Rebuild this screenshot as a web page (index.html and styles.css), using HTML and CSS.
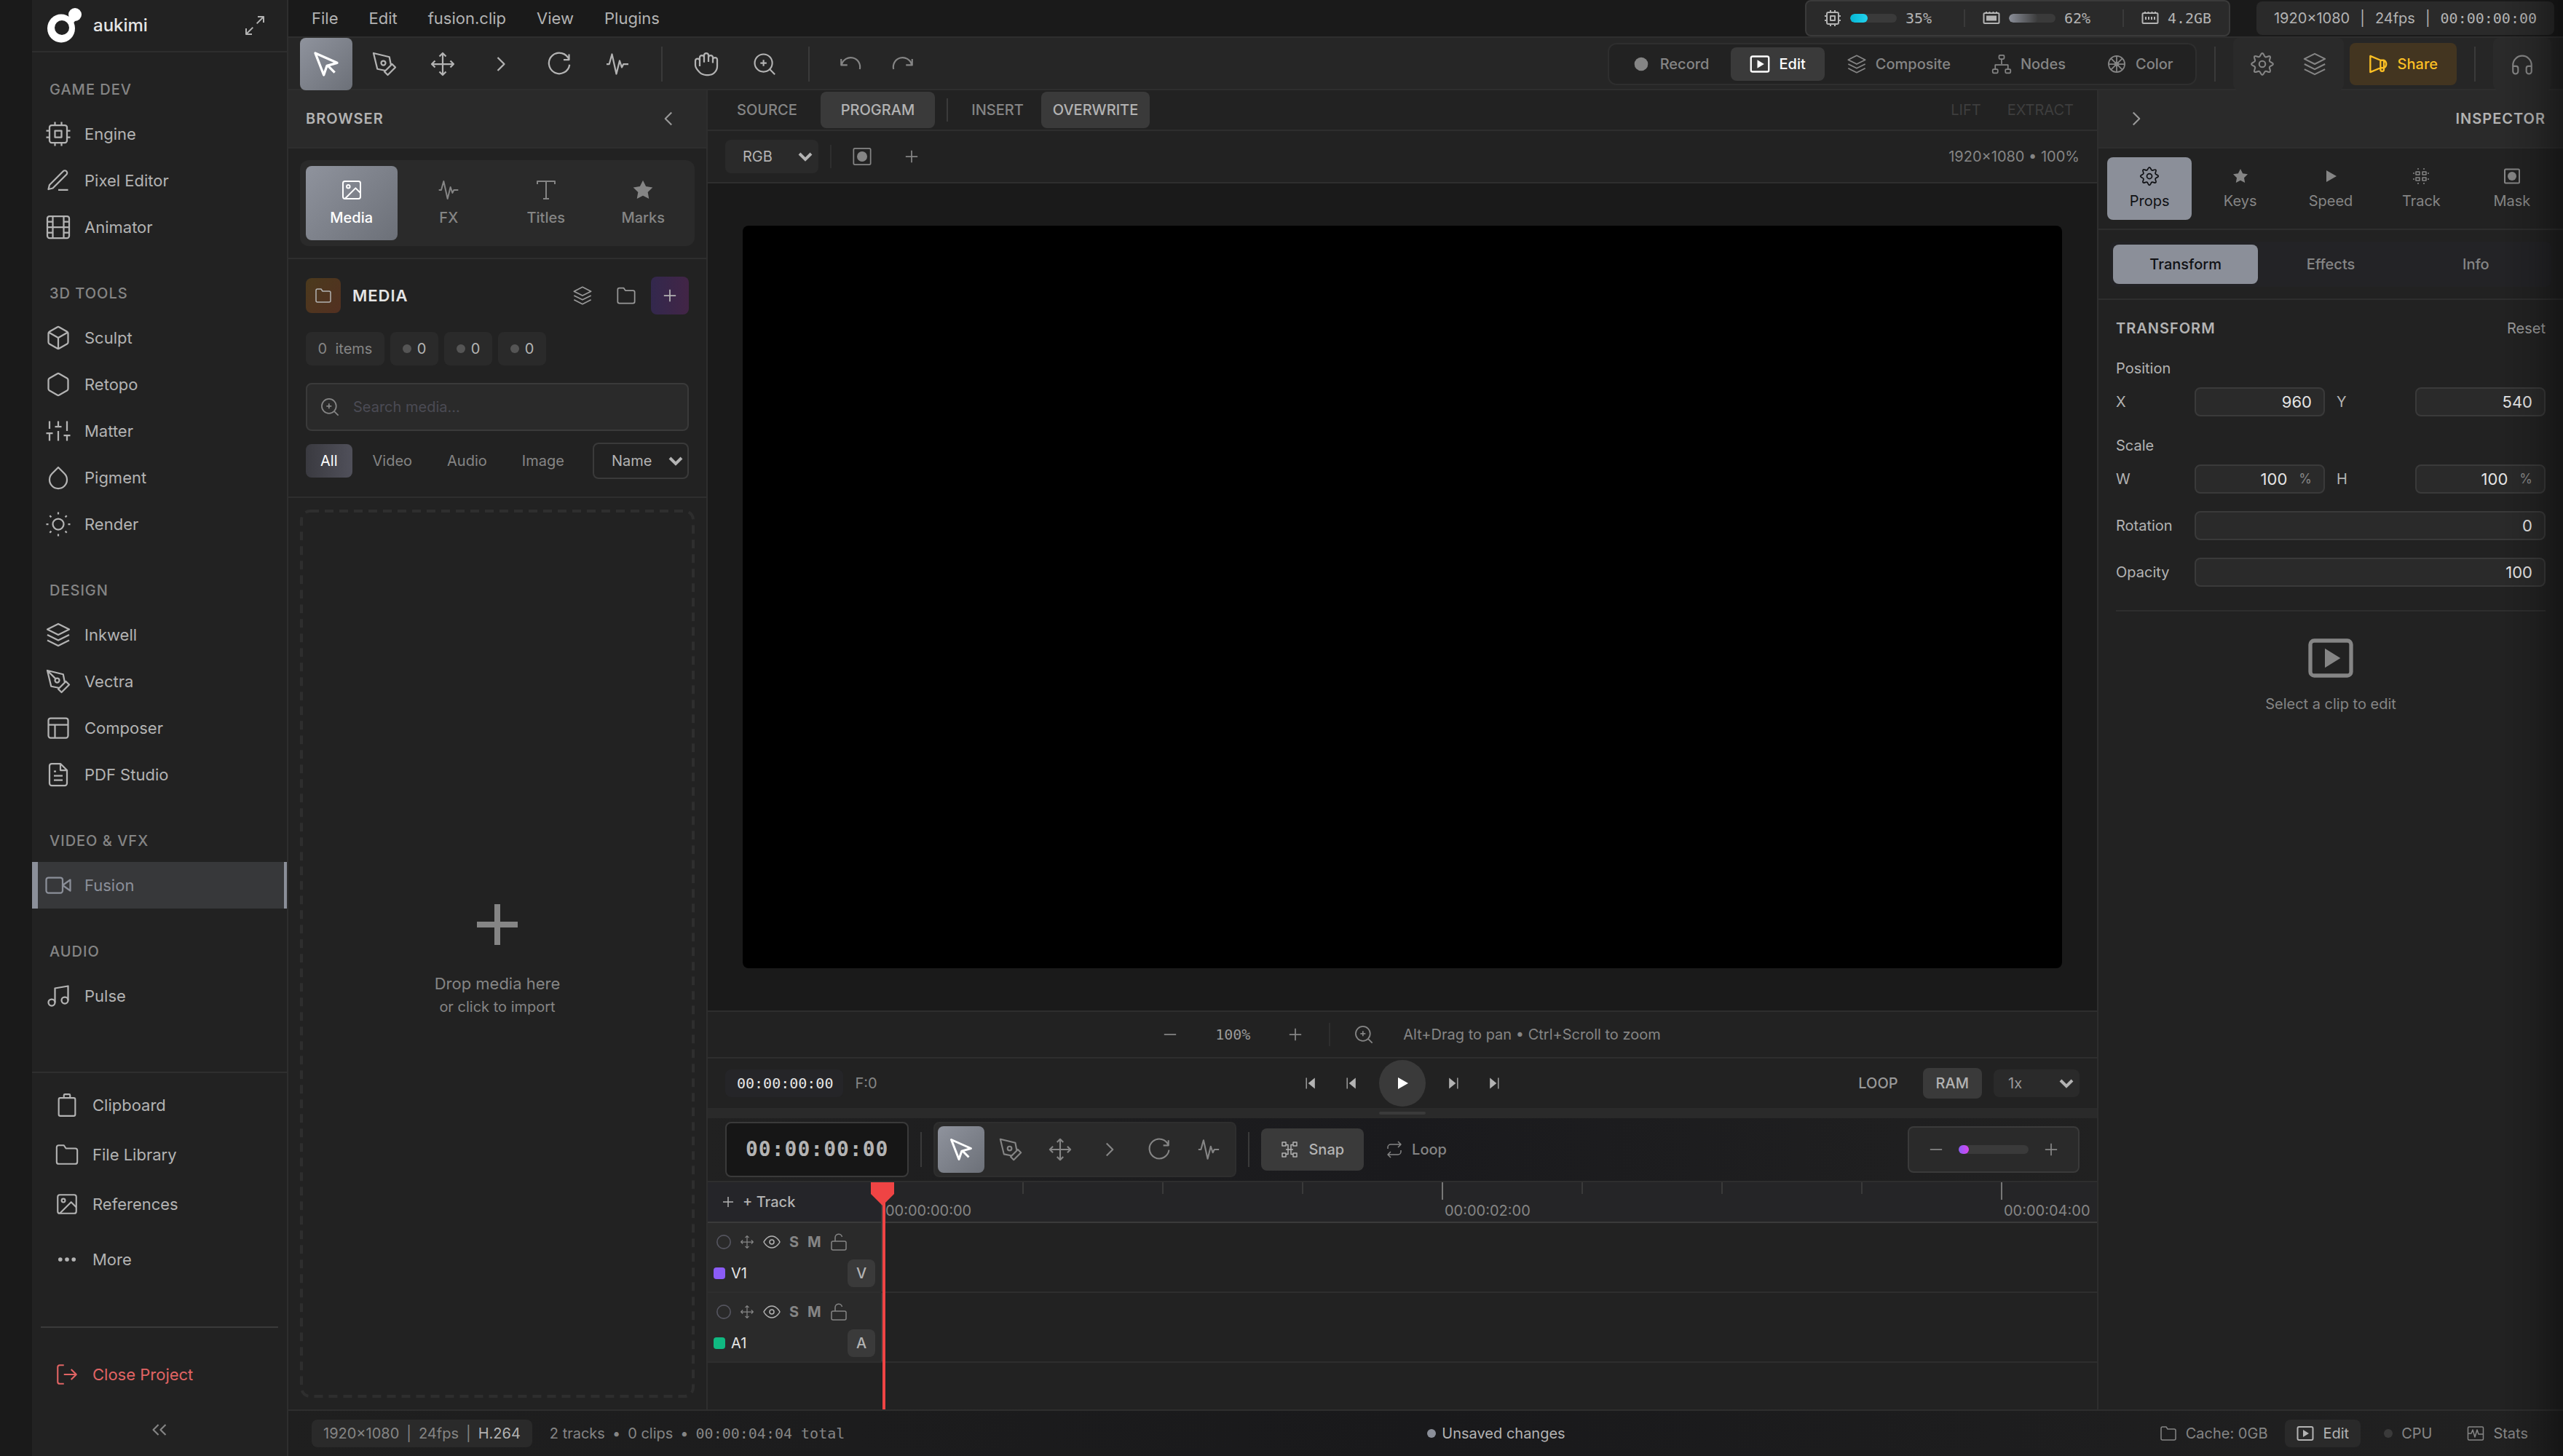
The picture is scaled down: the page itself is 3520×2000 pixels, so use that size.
FILE: index.html
```html
<!DOCTYPE html>
<html lang="en">
<head>
<meta charset="utf-8">
<title>aukimi – Fusion</title>
<link rel="stylesheet" href="styles.css">
</head>
<body>
<svg class="sprite" aria-hidden="true">
  <symbol id="cpu" viewBox="0 0 24 24"><rect x="4" y="4" width="16" height="16" rx="2"/><rect x="9" y="9" width="6" height="6"/><path d="M9 1v3M15 1v3M9 20v3M15 20v3M20 9h3M20 15h3M1 9h3M1 15h3"/></symbol>
  <symbol id="pencil" viewBox="0 0 24 24"><path d="M12 20.500h9M16.500 3.500a2.100 2.100 0 0 1 3 3L7 19l-4 1 1-4z"/></symbol>
  <symbol id="film" viewBox="0 0 24 24"><rect x="2" y="2" width="20" height="20" rx="2"/><path d="M7 2v20M17 2v20M2 12h20M2 7h5M2 17h5M17 17h5M17 7h5"/></symbol>
  <symbol id="box" viewBox="0 0 24 24"><path d="M21 16V8a2 2 0 0 0-1-1.730l-7-4a2 2 0 0 0-2 0l-7 4A2 2 0 0 0 3 8v8a2 2 0 0 0 1 1.730l7 4a2 2 0 0 0 2 0l7-4A2 2 0 0 0 21 16zM3.300 7 12 12l8.700-5M12 22V12"/></symbol>
  <symbol id="hexagon" viewBox="0 0 24 24"><path d="M21 16V8a2 2 0 0 0-1-1.730l-7-4a2 2 0 0 0-2 0l-7 4A2 2 0 0 0 3 8v8a2 2 0 0 0 1 1.730l7 4a2 2 0 0 0 2 0l7-4A2 2 0 0 0 21 16z"/></symbol>
  <symbol id="sliders" viewBox="0 0 24 24"><path d="M4 21v-7M4 10V3M12 21v-9M12 8V3M20 21v-5M20 12V3M1 14h6M9 8h6M17 16h6"/></symbol>
  <symbol id="drop" viewBox="0 0 24 24"><path d="M12 2.700l5.660 5.660a8 8 0 1 1-11.310 0z"/></symbol>
  <symbol id="sun" viewBox="0 0 24 24"><circle cx="12" cy="12" r="5"/><path d="M12 1v2M12 21v2M4.200 4.200l1.400 1.400M18.400 18.400l1.400 1.400M1 12h2M21 12h2M4.200 19.800l1.400-1.400M18.400 5.600l1.400-1.400"/></symbol>
  <symbol id="layers" viewBox="0 0 24 24"><path d="M12 2 2 7l10 5 10-5zM2 17l10 5 10-5M2 12l10 5 10-5"/></symbol>
  <symbol id="nib" viewBox="0 0 24 24"><path d="m12 19 7-7 3 3-7 7zM18 13l-1.500-7.500L2 2l3.500 14.500L13 18zM2 2l7.600 7.600"/><circle cx="11" cy="11" r="2"/></symbol>
  <symbol id="pen" viewBox="0 0 24 24"><path d="m12 19 7-7 3 3-7 7zM18 13l-1.500-7.500L2 2l3.500 14.500L13 18z"/><circle cx="11" cy="11" r="2"/></symbol>
  <symbol id="layout" viewBox="0 0 24 24"><rect x="3" y="3" width="18" height="18" rx="2"/><path d="M3 9h18M9 21V9"/></symbol>
  <symbol id="doc" viewBox="0 0 24 24"><path d="M14 2H6a2 2 0 0 0-2 2v16a2 2 0 0 0 2 2h12a2 2 0 0 0 2-2V8zM14 2v6h6M16 13H8M16 17H8M10 9H8"/></symbol>
  <symbol id="video" viewBox="0 0 24 24"><path d="m23 7-7 5 7 5z"/><rect x="1" y="5" width="15" height="14" rx="2"/></symbol>
  <symbol id="music" viewBox="0 0 24 24"><path d="M9 18V5l12-2v13"/><circle cx="6" cy="18" r="3"/><circle cx="18" cy="16" r="3"/></symbol>
  <symbol id="clipboard" viewBox="0 0 24 24"><rect x="4" y="5" width="16" height="17.500" rx="1.500"/><path d="M9 5V2.500a1 1 0 0 1 1-1h4a1 1 0 0 1 1 1V5"/></symbol>
  <symbol id="folder" viewBox="0 0 24 24"><path d="M22 19a2 2 0 0 1-2 2H4a2 2 0 0 1-2-2V5a2 2 0 0 1 2-2h5l2 3h9a2 2 0 0 1 2 2z"/></symbol>
  <symbol id="image" viewBox="0 0 24 24"><rect x="3" y="3" width="18" height="18" rx="2"/><circle cx="8.500" cy="8.500" r="1.700"/><path d="m21 15-5-5L5 21"/></symbol>
  <symbol id="dots" viewBox="0 0 24 24"><g class="solid"><circle cx="5.500" cy="12" r="2"/><circle cx="12" cy="12" r="2"/><circle cx="18.500" cy="12" r="2"/></g></symbol>
  <symbol id="exit" viewBox="0 0 24 24"><path d="M9 21H5a2 2 0 0 1-2-2V5a2 2 0 0 1 2-2h4M16 17l5-5-5-5M21 12H9"/></symbol>
  <symbol id="dleft" viewBox="0 0 24 24"><path d="m11 17-5-5 5-5M18 17l-5-5 5-5"/></symbol>
  <symbol id="expand" viewBox="0 0 24 24"><path d="M15 3h6v6M9 21H3v-6M21 3l-7 7M3 21l7-7"/></symbol>
  <symbol id="cursor" viewBox="0 0 24 24"><path d="m3 3 7 18 2.600-7.600L21 11zM13 13l6 6"/></symbol>
  <symbol id="move" viewBox="0 0 24 24"><path d="m5 9-3 3 3 3M9 5l3-3 3 3M15 19l-3 3-3-3M19 9l3 3-3 3M2 12h20M12 2v20"/></symbol>
  <symbol id="right" viewBox="0 0 24 24"><path d="m9 18 6-6-6-6"/></symbol>
  <symbol id="left" viewBox="0 0 24 24"><path d="m15 18-6-6 6-6"/></symbol>
  <symbol id="rotate" viewBox="0 0 24 24"><path d="M21 3v5h-5M21 8a9.500 9.500 0 1 0 .500 4.500"/></symbol>
  <symbol id="pulse" viewBox="0 0 24 24"><path d="M2 12h2.500L7 3l4 18 3-12 2 6 1.500-3H22"/></symbol>
  <symbol id="hand" viewBox="0 0 24 24"><path d="M18 11V6a2 2 0 0 0-4 0M14 10V4a2 2 0 0 0-4 0v2M10 10.500V6a2 2 0 0 0-4 0v8M18 8a2 2 0 1 1 4 0v6a8 8 0 0 1-8 8h-2c-2.800 0-4.500-.900-6-2.300C4 17.700 2 15 2 13V9a2 2 0 0 1 4 0"/></symbol>
  <symbol id="zoom" viewBox="0 0 24 24"><circle cx="11" cy="11" r="8.500"/><path d="m17 17 5 5M11 8v6M8 11h6"/></symbol>
  <symbol id="undo" viewBox="0 0 24 24"><path d="M3 7v6h6M3.500 12.500A9 9 0 0 1 21 17"/></symbol>
  <symbol id="redo" viewBox="0 0 24 24"><path d="M21 7v6h-6M20.500 12.500A9 9 0 0 0 3 17"/></symbol>
  <symbol id="rec" viewBox="0 0 24 24"><circle class="solid" cx="12" cy="12" r="8"/></symbol>
  <symbol id="clip" viewBox="0 0 24 24"><rect x="1.500" y="3" width="21" height="18" rx="2"/><path class="solid" d="m9 7 8 5-8 5z"/></symbol>
  <symbol id="nodes" viewBox="0 0 24 24"><rect x="9" y="1.500" width="6" height="4.500" rx="1"/><rect x="1.500" y="18" width="6" height="4.500" rx="1"/><rect x="16.500" y="18" width="6" height="4.500" rx="1"/><path d="M12 6v6M4.500 18v-5h15v5"/></symbol>
  <symbol id="wheel" viewBox="0 0 24 24"><circle cx="12" cy="12" r="9.500"/><circle cx="12" cy="12" r="2"/><path d="M12 2v20M2 12h20M5 5l14 14M19 5 5 19"/></symbol>
  <symbol id="gear" viewBox="0 0 24 24"><circle cx="12" cy="12" r="3"/><path d="M12 1.500c1.700 0 1.500 3 3 3.600s3.300-1.700 4.500-.500-1.100 3-.500 4.500 3.500 1.200 3.500 2.900-3 1.500-3.500 3 1.700 3.300.500 4.500-3-1.100-4.500-.500-1.300 3.500-3 3.500-1.500-3-3-3.500-3.300 1.700-4.500.500 1.100-3 .500-4.500-3.500-1.300-3.500-3 3-1.500 3.500-3-1.700-3.300-.500-4.500 3 1.100 4.500.500 1.300-3.500 3-3.500z"/></symbol>
  <symbol id="horn" viewBox="0 0 24 24"><path d="M2 2.500v19l12-5h4a5 5 0 0 0 0-9h-4zM14 7.500v11a2 2 0 0 0 4 0v-11"/></symbol>
  <symbol id="phones" viewBox="0 0 24 24"><path d="M3 19v-6a9 9 0 0 1 18 0v6M3 14h3a2 2 0 0 1 2 2v3a2 2 0 0 1-5 0zM21 14h-3a2 2 0 0 0-2 2v3a2 2 0 0 0 5 0z"/></symbol>
  <symbol id="gpu" viewBox="0 0 24 24"><rect x="1.500" y="5" width="21" height="14" rx="1.500"/><path d="M5 5V3M9.500 5V3M14.500 5V3M19 5V3"/><path class="solid" d="M5 8.500h14v7H5z"/></symbol>
  <symbol id="ram" viewBox="0 0 24 24"><rect x="1.500" y="5" width="21" height="14" rx="1.500"/><path d="M5 5V3M9.500 5V3M14.500 5V3M19 5V3M6 10v4M10 10v4M14 10v4M18 10v4"/></symbol>
  <symbol id="star" viewBox="0 0 24 24"><path class="solid" d="m12 2 3.100 6.300 6.900 1-5 4.900 1.200 6.800L12 17.800 5.800 21 7 14.200 2 9.300l6.900-1z"/></symbol>
  <symbol id="type" viewBox="0 0 24 24"><path d="M3 6V3h18v3M12 3v18M9 21h6"/></symbol>
  <symbol id="play" viewBox="0 0 24 24"><path class="solid" d="m6 4 14 8-14 8z"/></symbol>
  <symbol id="grid" viewBox="0 0 24 24"><path d="M5 6h5v4H5zM14 6h5v4h-5zM5 14h5v4H5zM14 14h5v4h-5zM8 1v2M16 1v2M8 21v2M16 21v2M1 8h2M1 16h2M21 8h2M21 16h2"/></symbol>
  <symbol id="mask" viewBox="0 0 24 24"><rect x="2" y="2.500" width="20" height="19" rx="1.500"/><circle class="solid" cx="12" cy="12" r="6"/></symbol>
  <symbol id="cmd" viewBox="0 0 24 24"><path d="M2 2h5v5H2zM17 2h5v5h-5zM2 17h5v5H2zM17 17h5v5h-5zM7 5.500h3v13H7M17 5.500h-3v13h3M7 12h10"/></symbol>
  <symbol id="repeat" viewBox="0 0 24 24"><path d="m17 1 4 4-4 4M3 11V9a4 4 0 0 1 4-4h14M7 23l-4-4 4-4M21 13v2a4 4 0 0 1-4 4H3"/></symbol>
  <symbol id="unlock" viewBox="0 0 24 24"><rect x="2" y="11" width="20" height="12" rx="2"/><path d="M7 11V6a4.800 4.800 0 0 1 9.500-1"/></symbol>
  <symbol id="eye" viewBox="0 0 24 24"><path d="M1 12s4-8 11-8 11 8 11 8-4 8-11 8S1 12 1 12z"/><circle cx="12" cy="12" r="3"/></symbol>
  <symbol id="prev" viewBox="0 0 24 24"><path d="M5 3v18"/><path class="solid" d="M19 3v18L8 12z"/></symbol>
  <symbol id="next" viewBox="0 0 24 24"><path d="M19 3v18"/><path class="solid" d="M5 3v18l11-9z"/></symbol>
  <symbol id="plus" viewBox="0 0 24 24"><path d="M12 5v14M5 12h14"/></symbol>
  <symbol id="minus" viewBox="0 0 24 24"><path d="M5 12h14"/></symbol>
  <symbol id="ring" viewBox="0 0 24 24"><circle cx="12" cy="12" r="11"/></symbol>
  <symbol id="stats" viewBox="0 0 24 24"><rect x="1.500" y="3" width="21" height="18" rx="1.500"/><path d="M2 12h4l2-5 3 10 3-10 2 6h6"/></symbol>
</svg>

<div class="app">
  <div class="rail"></div>

  <aside class="sidebar">
    <header class="brand">
      <svg class="logo" viewBox="0 0 48 48" aria-hidden="true"><circle cx="39" cy="9" r="9"/><path d="M30 12l9 6-5 6-8-8z"/><ellipse cx="20" cy="28" rx="19" ry="19.500"/><ellipse class="hole" cx="21" cy="27" rx="10" ry="10"/></svg>
      <span class="brand-name">aukimi</span>
      <button class="plain" aria-label="Expand"><svg class="i i32"><use href="#expand"/></svg></button>
    </header>
    <nav class="nav">
      <section><h2>GAME DEV</h2>
        <a href="#"><svg class="i i36"><use href="#cpu"/></svg>Engine</a>
        <a href="#"><svg class="i i36"><use href="#pencil"/></svg>Pixel Editor</a>
        <a href="#"><svg class="i i36"><use href="#film"/></svg>Animator</a></section>
      <section><h2>3D TOOLS</h2>
        <a href="#"><svg class="i i36"><use href="#box"/></svg>Sculpt</a>
        <a href="#"><svg class="i i36"><use href="#hexagon"/></svg>Retopo</a>
        <a href="#"><svg class="i i36"><use href="#sliders"/></svg>Matter</a>
        <a href="#"><svg class="i i36"><use href="#drop"/></svg>Pigment</a>
        <a href="#"><svg class="i i36"><use href="#sun"/></svg>Render</a></section>
      <section><h2>DESIGN</h2>
        <a href="#"><svg class="i i36"><use href="#layers"/></svg>Inkwell</a>
        <a href="#"><svg class="i i36"><use href="#nib"/></svg>Vectra</a>
        <a href="#"><svg class="i i36"><use href="#layout"/></svg>Composer</a>
        <a href="#"><svg class="i i36"><use href="#doc"/></svg>PDF Studio</a></section>
      <section><h2>VIDEO &amp; VFX</h2>
        <a href="#" class="current"><svg class="i i36"><use href="#video"/></svg>Fusion</a></section>
      <section><h2>AUDIO</h2>
        <a href="#"><svg class="i i36"><use href="#music"/></svg>Pulse</a></section>
    </nav>
    <footer class="side-foot">
      <button><svg class="i i34"><use href="#clipboard"/></svg>Clipboard</button>
      <button><svg class="i i34"><use href="#folder"/></svg>File Library</button>
      <button><svg class="i i34"><use href="#image"/></svg>References</button>
      <button class="more"><svg class="i i34"><use href="#dots"/></svg>More</button>
      <hr>
      <button class="close"><svg class="i i34"><use href="#exit"/></svg>Close Project</button>
      <button class="collapse" aria-label="Collapse sidebar"><svg class="i i34"><use href="#dleft"/></svg></button>
    </footer>
  </aside>

  <div class="main">
    <header class="menubar">
      <nav class="menus"><button>File</button><button>Edit</button><button>fusion.clip</button><button>View</button><button>Plugins</button></nav>
      <div class="monitors">
        <div class="mon"><svg class="i i24 heavy"><use href="#cpu"/></svg><span class="meter"><span class="fill cyan" style="width:38%"></span></span><span class="mono">35%</span></div>
        <div class="mon"><svg class="i i24 heavy"><use href="#gpu"/></svg><span class="meter"><span class="fill grey" style="width:62%"></span></span><span class="mono">62%</span></div>
        <div class="mon"><svg class="i i24 heavy"><use href="#ram"/></svg><span class="mono">4.2GB</span></div>
      </div>
      <div class="project"><span>1920×1080</span><span>|</span><span>24fps</span><span>|</span><b class="mono">00:00:00:00</b></div>
    </header>

    <div class="toolbar">
      <div class="tools">
        <button class="on" aria-label="Select"><svg class="i i40 heavy"><use href="#cursor"/></svg></button>
        <button aria-label="Pen"><svg class="i i36"><use href="#pen"/></svg></button>
        <button aria-label="Move"><svg class="i i36"><use href="#move"/></svg></button>
        <button aria-label="Trim"><svg class="i i36"><use href="#right"/></svg></button>
        <button aria-label="Rotate"><svg class="i i36"><use href="#rotate"/></svg></button>
        <button aria-label="Audio"><svg class="i i36"><use href="#pulse"/></svg></button>
      </div>
      <i class="sep"></i>
      <div class="tools">
        <button aria-label="Hand"><svg class="i i36"><use href="#hand"/></svg></button>
        <button aria-label="Zoom"><svg class="i i34"><use href="#zoom"/></svg></button>
      </div>
      <i class="sep"></i>
      <div class="history">
        <button aria-label="Undo"><svg class="i i34"><use href="#undo"/></svg></button>
        <button aria-label="Redo"><svg class="i i34"><use href="#redo"/></svg></button>
      </div>
      <div class="modes">
        <button><svg class="i i28"><use href="#rec"/></svg>Record</button>
        <button class="on"><svg class="i i28 heavy"><use href="#clip"/></svg>Edit</button>
        <button><svg class="i i28"><use href="#layers"/></svg>Composite</button>
        <button><svg class="i i28"><use href="#nodes"/></svg>Nodes</button>
        <button><svg class="i i28"><use href="#wheel"/></svg>Color</button>
      </div>
      <i class="sep"></i>
      <div class="actions">
        <button aria-label="Settings"><svg class="i i34"><use href="#gear"/></svg></button>
        <button aria-label="Layers"><svg class="i i34"><use href="#layers"/></svg></button>
      </div>
      <button class="share"><svg class="i i28 heavy"><use href="#horn"/></svg>Share</button>
      <i class="sep"></i>
      <button class="listen" aria-label="Audio monitor"><svg class="i i34"><use href="#phones"/></svg></button>
    </div>

    <div class="work">
      <section class="browser">
        <header class="panel-head"><h1>BROWSER</h1><button class="plain" aria-label="Collapse"><svg class="i i34"><use href="#left"/></svg></button></header>
        <div class="tabs-wrap"><div class="tabs">
          <button class="on"><svg class="i i32"><use href="#image"/></svg>Media</button>
          <button><svg class="i i32"><use href="#pulse"/></svg>FX</button>
          <button><svg class="i i32"><use href="#type"/></svg>Titles</button>
          <button><svg class="i i32"><use href="#star"/></svg>Marks</button>
        </div></div>
        <div class="media">
          <div class="media-head">
            <span class="badge"><svg class="i i24"><use href="#folder"/></svg></span><h2>MEDIA</h2>
            <button aria-label="Stack"><svg class="i i28"><use href="#layers"/></svg></button>
            <button aria-label="New folder"><svg class="i i28"><use href="#folder"/></svg></button>
            <button class="add" aria-label="Add"><svg class="i i28"><use href="#plus"/></svg></button>
          </div>
          <div class="chips"><span class="count">0 &nbsp;items</span><span><i></i>0</span><span><i></i>0</span><span><i></i>0</span></div>
          <label class="search"><svg class="i i28"><use href="#zoom"/></svg><input type="text" placeholder="Search media..." aria-label="Search media"></label>
          <div class="filters"><button class="on">All</button><button>Video</button><button>Audio</button><button>Image</button>
            <select aria-label="Sort"><option>Name</option></select></div>
        </div>
        <div class="drop-wrap"><button class="drop"><svg class="dash" aria-hidden="true"><rect x="2" y="2" rx="12"/></svg><svg class="i i96"><use href="#plus"/></svg><span class="l1">Drop media here</span><span class="l2">or click to import</span></button></div>
      </section>

      <section class="center">
        <div class="viewbar">
          <button>SOURCE</button><button class="wide on">PROGRAM</button><i class="sep"></i><button class="tight">INSERT</button><button class="tight on">OVERWRITE</button>
          <button class="off push" disabled>LIFT</button><button class="off" disabled>EXTRACT</button>
        </div>
        <div class="optbar">
          <select aria-label="Channel"><option>RGB</option></select><i class="sep thin"></i>
          <button aria-label="Mask"><svg class="i i28"><use href="#mask"/></svg></button><button aria-label="Add"><svg class="i i28"><use href="#plus"/></svg></button>
          <span class="dims">1920×1080 • 100%</span>
        </div>
        <div class="stage"><div class="screen"></div></div>
        <div class="zoombar">
          <button aria-label="Zoom out"><svg class="i i28"><use href="#minus"/></svg></button><span class="mono pct">100%</span><button aria-label="Zoom in"><svg class="i i28"><use href="#plus"/></svg></button>
          <i class="sep thin"></i><button aria-label="Fit"><svg class="i i28"><use href="#zoom"/></svg></button><span class="hint">Alt+Drag to pan • Ctrl+Scroll to zoom</span>
        </div>
        <div class="transport">
          <div class="tc"><span class="mono tcbox">00:00:00:00</span><span class="frame">F:0</span></div>
          <div class="keys">
            <button aria-label="Start"><svg class="i i20"><use href="#prev"/></svg></button><button aria-label="Back"><svg class="i i20"><use href="#prev"/></svg></button>
            <button class="playbtn" aria-label="Play"><svg class="i i24"><use href="#play"/></svg></button>
            <button aria-label="Forward"><svg class="i i20"><use href="#next"/></svg></button><button aria-label="End"><svg class="i i20"><use href="#next"/></svg></button>
          </div>
          <div class="rate"><button>LOOP</button><button class="on">RAM</button><select aria-label="Speed"><option>1x</option></select></div>
        </div>
        <div class="grip"><i></i></div>

        <div class="tlbar">
          <output class="mono bigtc">00:00:00:00</output><i class="sep"></i>
          <div class="tltools">
            <button class="on" aria-label="Select"><svg class="i i36 heavy"><use href="#cursor"/></svg></button>
            <button aria-label="Pen"><svg class="i i34"><use href="#pen"/></svg></button>
            <button aria-label="Move"><svg class="i i34"><use href="#move"/></svg></button>
            <button aria-label="Trim"><svg class="i i34"><use href="#right"/></svg></button>
            <button aria-label="Rotate"><svg class="i i34"><use href="#rotate"/></svg></button>
            <button aria-label="Audio"><svg class="i i34"><use href="#pulse"/></svg></button>
          </div><i class="sep"></i>
          <button class="snap on"><svg class="i i24"><use href="#cmd"/></svg>Snap</button>
          <button class="snap"><svg class="i i24"><use href="#repeat"/></svg>Loop</button>
          <div class="tlzoom"><button aria-label="Zoom out"><svg class="i i28"><use href="#minus"/></svg></button><span class="slider"><span></span></span><button aria-label="Zoom in"><svg class="i i28"><use href="#plus"/></svg></button></div>
        </div>
        <div class="timeline">
          <div class="ruler-row">
            <button class="addtrack"><svg class="i i24"><use href="#plus"/></svg>+ Track</button>
            <div class="ruler">
              <span class="maj">00:00:00:00</span><span></span><span></span><span></span>
              <span class="maj">00:00:02:00</span><span></span><span></span><span></span>
              <span class="maj">00:00:04:00</span>
            </div>
          </div>
          <div class="track">
            <div class="thead"><div class="trow"><svg class="i i20 dim"><use href="#ring"/></svg><svg class="i i20"><use href="#move"/></svg><svg class="i i24 lit"><use href="#eye"/></svg><b>S</b><b>M</b><svg class="i i24"><use href="#unlock"/></svg></div>
            <div class="tname"><i class="violet"></i><span>V1</span><button>V</button></div></div><div class="lane"></div>
          </div>
          <div class="track">
            <div class="thead"><div class="trow"><svg class="i i20 dim"><use href="#ring"/></svg><svg class="i i20"><use href="#move"/></svg><svg class="i i24 lit"><use href="#eye"/></svg><b>S</b><b>M</b><svg class="i i24"><use href="#unlock"/></svg></div>
            <div class="tname"><i class="green"></i><span>A1</span><button>A</button></div></div><div class="lane"></div>
          </div>
          <div class="playhead"></div>
        </div>
      </section>

      <aside class="inspector">
        <header class="panel-head"><button class="plain" aria-label="Collapse"><svg class="i i34"><use href="#right"/></svg></button><h1>INSPECTOR</h1></header>
        <div class="itabs">
          <button class="on"><svg class="i i28"><use href="#gear"/></svg>Props</button>
          <button><svg class="i i24"><use href="#star"/></svg>Keys</button>
          <button><svg class="i i24"><use href="#play"/></svg>Speed</button>
          <button><svg class="i i24"><use href="#grid"/></svg>Track</button>
          <button><svg class="i i24 heavy"><use href="#mask"/></svg>Mask</button>
        </div>
        <div class="seg-wrap"><div class="seg"><button class="on">Transform</button><button>Effects</button><button>Info</button></div></div>
        <form class="props">
          <div class="props-head"><h2>TRANSFORM</h2><button type="button">Reset</button></div>
          <h3>Position</h3>
          <div class="pair">
            <div class="field"><label for="px">X</label><span class="box"><input id="px" value="960"></span></div>
            <div class="field"><label for="py">Y</label><span class="box"><input id="py" value="540"></span></div>
          </div>
          <h3>Scale</h3>
          <div class="pair">
            <div class="field"><label for="sw">W</label><span class="box"><input id="sw" value="100"><em>%</em></span></div>
            <div class="field"><label for="sh">H</label><span class="box"><input id="sh" value="100"><em>%</em></span></div>
          </div>
          <div class="field wide"><label for="rot">Rotation</label><span class="box"><input id="rot" value="0"></span></div>
          <div class="field wide"><label for="op">Opacity</label><span class="box"><input id="op" value="100"></span></div>
          <div class="empty"><svg class="i i64 heavy"><use href="#clip"/></svg><p>Select a clip to edit</p></div>
        </form>
      </aside>
    </div>

    <footer class="status">
      <div class="s-left"><span class="pill"><span>1920×1080</span><span>|</span><span>24fps</span><span>|</span><b>H.264</b></span>
        <span class="sum"><span>2 tracks</span><span>•</span><span>0 clips</span><span>•</span><span class="mono">00:00:04:04 total</span></span></div>
      <div class="s-mid"><i></i>Unsaved changes</div>
      <div class="s-right">
        <button><svg class="i i24"><use href="#folder"/></svg>Cache: 0GB</button>
        <button class="on"><svg class="i i24 heavy"><use href="#clip"/></svg>Edit</button>
        <button class="cpu"><i></i>CPU</button>
        <button><svg class="i i24"><use href="#stats"/></svg>Stats</button>
      </div>
    </footer>
  </div>
</div>
</body>
</html>
```

FILE: styles.css
```css
:root {
  --bg: #1a1a1a;
  --panel: #222222;
  --raised: #2a2a2a;
  --line: #2e2e2e;
  --line2: #3a3a3a;
  --text: #b3b3b3;
  --mute: #858585;
  --steel: #8b8f99;
  --chev: url("data:image/svg+xml,%3Csvg xmlns='http://www.w3.org/2000/svg' viewBox='0 0 20 14'%3E%3Cpath d='M2 3l8 8 8-8' fill='none' stroke='%23b3b3b3' stroke-width='4'/%3E%3C/svg%3E");
}
* { box-sizing: border-box; margin: 0; padding: 0; }
html, body { height: 100%; }
body { background: var(--bg); color: var(--text); font: 400 20px/28px Inter, "Liberation Sans", sans-serif; overflow: hidden; }
button, input, select { font: inherit; color: inherit; background: none; border: 0; outline: 0; }
button { display: flex; align-items: center; justify-content: center; white-space: nowrap; }
a { color: inherit; text-decoration: none; }
h1, h2, h3 { font-size: 20px; font-weight: 500; }
.mono { font-family: "DejaVu Sans Mono", "Liberation Mono", monospace; }
.sprite { position: absolute; width: 0; height: 0; }
.i { display: block; flex: none; fill: none; stroke: currentColor; stroke-width: 1.5; stroke-linejoin: round; }
.heavy { stroke-width: 2; }
.solid { fill: currentColor; stroke: none; }
.i20 { width: 20px; height: 20px; }
.i24 { width: 24px; height: 24px; }
.i28 { width: 28px; height: 28px; }
.i32 { width: 32px; height: 32px; }
.i34 { width: 34px; height: 34px; }
.i36 { width: 36px; height: 36px; }
.i40 { width: 40px; height: 40px; }
.i64 { width: 64px; height: 64px; }
.i96 { width: 96px; height: 96px; stroke-width: 2; }
select { appearance: none; background: var(--raised) var(--chev) right 8px center / 20px 14px no-repeat; border-radius: 8px; }
.sep { flex: none; width: 2px; height: 48px; background: var(--line2); }
.sep.thin { height: 32px; background: var(--line); }

.app { display: flex; height: 100vh; }
/* soft shade along the right window edge */
.app::after { content: ""; position: fixed; inset: 0 0 0 auto; width: 80px; background: linear-gradient(90deg, transparent, rgba(0, 0, 0, .1) 50%, rgba(0, 0, 0, .35)); pointer-events: none; }
.rail { flex: none; width: 44px; }

.sidebar { flex: none; width: 352px; display: flex; flex-direction: column; background: var(--panel); border-right: 2px solid var(--line); }
.brand { height: 72px; display: flex; align-items: center; padding: 0 28px 0 20px; border-bottom: 2px solid var(--line); gap: 16px; }
.logo { width: 48px; height: 48px; fill: #fff; }
.logo .hole { fill: var(--panel); }
.brand-name { flex: 1; color: #e5e5e5; font-size: 24px; font-weight: 500; }
.nav { flex: 1; min-height: 0; font-size: 22px; }
.nav section { margin-bottom: 8px; }
.nav h2 { padding: 36px 24px 14px; line-height: 30px; color: var(--mute); letter-spacing: 1px; }
.nav a { display: flex; align-items: center; gap: 18px; height: 64px; padding-left: 10px; border-left: 8px solid transparent; border-right: 4px solid transparent; }
.nav .current { color: var(--steel); background: #37383a; border-color: var(--steel); }
.side-foot { display: flex; flex-direction: column; border-top: 2px solid var(--line); padding-top: 10px; font-size: 22px; }
.side-foot button { height: 68px; justify-content: flex-start; gap: 18px; padding-left: 31px; }
.side-foot .more { margin-top: 8px; }
.side-foot hr { border: 0; height: 2px; background: var(--line2); margin: 58px 12px 30px; }
.side-foot .close { color: #e06464; }
.side-foot .collapse { color: var(--mute); justify-content: center; padding: 0; margin: 8px 0 2px; }

.main { flex: 1; min-width: 0; display: flex; flex-direction: column; }
.menubar { display: flex; align-items: center; height: 52px; border-bottom: 2px solid var(--line); padding-right: 12px; }
.menus { display: flex; flex: 1; padding-left: 12px; font-size: 22px; }
.menus button { padding: 0 20px; }
.menus button + button { margin-left: 2px; }
.monitors { display: flex; align-items: center; height: 50px; border: 2px solid var(--line2); border-radius: 8px; background: var(--raised); }
.mon { display: flex; align-items: center; gap: 12px; height: 24px; padding: 0 16px 0 24px; border-right: 2px solid var(--line2); }
.mon:last-child { border: 0; padding-right: 20px; }
.mon .mono { min-width: 64px; }
.meter { width: 64px; height: 12px; border-radius: 6px; background: var(--line2); overflow: hidden; }
.fill { display: block; height: 100%; border-radius: 6px; }
.cyan { background: linear-gradient(90deg, #06b6d4, #22d3ee); }
.grey { background: linear-gradient(90deg, var(--steel), var(--line2)); }
.project { display: flex; gap: 14px; margin-left: 36px; padding: 9px 24px; border-radius: 8px; background: var(--raised); }
.project b { font-weight: 400; }

.toolbar { display: flex; align-items: center; height: 72px; padding: 0 16px; background: #262626; box-shadow: inset 0 -2px var(--line); }
.tools, .history { display: flex; gap: 8px; }
.tools button { width: 72px; height: 72px; border-radius: 8px; }
.history button { width: 64px; height: 64px; color: var(--mute); }
.toolbar > .sep { margin: 0 24px; }
.tools .on, .tltools .on, .tabs .on { color: #fff; background: linear-gradient(135deg, #8f939d, #6c7078); }
.modes { display: flex; margin-left: auto; gap: 4px; padding: 4px; height: 58px; border: 2px solid var(--line); border-radius: 12px; background: var(--panel); color: var(--mute); font-weight: 500; }
.modes button { gap: 12px; padding: 0 26px; border-radius: 8px; }
.modes .on { color: #fff; background: var(--line2); }
.actions { display: flex; background: var(--raised); border-radius: 8px; padding: 0 4px; color: var(--mute); }
.actions button { width: 72px; height: 72px; }
.share { gap: 12px; height: 58px; padding: 0 26px; margin-left: 8px; border-radius: 8px; background: #433520; color: #fbbf24; font-size: 20px; font-weight: 500; }
.listen { width: 80px; height: 72px; border-radius: 8px; background: var(--raised); color: var(--mute); }

.work { flex: 1; min-height: 0; display: flex; }
.panel-head { flex: none; display: flex; align-items: center; justify-content: space-between; height: 80px; padding: 0 24px; background: var(--raised); border-bottom: 2px solid var(--line); }
.panel-head h1 { font-weight: 600; letter-spacing: 1px; }
.panel-head .plain { width: 56px; height: 48px; color: #999; }

.browser { flex: none; width: 576px; display: flex; flex-direction: column; background: var(--panel); border-right: 2px solid var(--line); }
.tabs-wrap { padding: 16px; border-bottom: 2px solid var(--line); }
.tabs { display: grid; grid-template-columns: repeat(4, 1fr); gap: 8px; padding: 8px; border-radius: 12px; background: var(--raised); color: var(--mute); }
.tabs button { flex-direction: column; gap: 8px; height: 102px; border-radius: 8px; font-weight: 500; }
.media { display: flex; flex-direction: column; padding: 24px; border-bottom: 2px solid var(--line); }
.media-head { display: flex; align-items: center; height: 52px; color: #999; }
.media-head h2 { flex: 1; margin-left: 16px; color: #e5e5e5; font-size: 22px; font-weight: 600; letter-spacing: 1px; }
.badge { display: grid; place-items: center; width: 48px; height: 48px; border-radius: 8px; background: linear-gradient(135deg, #4b3a1d, #533021); color: var(--text); }
.media-head button { width: 52px; height: 52px; border-radius: 8px; margin-left: 8px; }
.media-head .add { background: linear-gradient(90deg, #33284d, #422546); color: var(--text); }
.chips { display: flex; gap: 8px; margin-top: 24px; }
.chips span { display: flex; align-items: center; justify-content: center; gap: 8px; min-width: 66px; height: 46px; border-radius: 8px; background: var(--raised); }
.chips .count { min-width: 108px; color: var(--mute); }
.chips i { width: 12px; height: 12px; border-radius: 50%; background: #555; }
.search { display: flex; align-items: center; gap: 18px; height: 66px; margin-top: 24px; padding: 0 17px; border: 2px solid var(--line2); border-radius: 8px; background: var(--raised); color: var(--mute); }
.search input { flex: 1; min-width: 0; }
.search input::placeholder { color: #4b4b54; }
.filters { display: flex; align-items: center; gap: 8px; margin-top: 16px; color: var(--mute); }
.filters button { height: 46px; padding: 0 20px; border-radius: 8px; }
.filters .on { color: #fff; background: linear-gradient(90deg, #3a3a40, #50505a); }
.filters select { margin-left: auto; width: 132px; height: 50px; padding-left: 24px; border: 2px solid var(--line2); color: var(--text); background-color: var(--panel); background-position: right 6px center; }
.drop-wrap { flex: 1; display: flex; padding: 16px; }
.drop { position: relative; flex: 1; flex-direction: column; color: var(--mute); }
.dash { position: absolute; inset: 0; width: 100%; height: 100%; fill: none; stroke: var(--line); stroke-width: 4; stroke-dasharray: 12 8; }
.dash rect { width: calc(100% - 4px); height: calc(100% - 4px); }
.drop .l1 { margin-top: 17px; font-size: 22px; line-height: 32px; }
.drop .l2 { line-height: 32px; }

.center { flex: 1; min-width: 0; display: flex; flex-direction: column; background: var(--panel); }
.viewbar, .optbar, .zoombar { flex: none; display: flex; align-items: center; padding: 0 24px 0 16px; border-bottom: 2px solid var(--line); color: var(--mute); }
.viewbar { height: 56px; gap: 8px; }
.viewbar button { height: 50px; padding: 0 24px; border-radius: 8px; font-weight: 500; }
.viewbar .sep { height: 32px; margin: 0 8px; }
.viewbar .wide { padding: 0 28px; }
.viewbar .tight { padding: 0 16px; }
.viewbar .on { background: var(--line2); color: var(--text); }
.viewbar .off { color: #3e3e3e; padding: 0 8px; font-weight: 400; }
.viewbar .push { margin-left: auto; margin-right: 12px; }
.optbar { height: 72px; padding-left: 24px; }
.optbar select { width: 128px; height: 46px; padding-left: 24px; color: var(--text); margin-right: 16px; }
.optbar button { width: 68px; height: 48px; }
.optbar .thin { margin-right: 8px; }
.dims { margin-left: auto; }
.stage { flex: 1; min-height: 0; display: flex; flex-direction: column; justify-content: center; padding: 0 48px; background: var(--bg); border-bottom: 2px solid var(--line); }
.screen { aspect-ratio: 16 / 9; border-radius: 8px; background: #000; }
.zoombar { height: 64px; justify-content: center; padding: 0 0 0 6px; }
.zoombar button { width: 60px; height: 48px; }
.zoombar .pct { width: 112px; text-align: center; color: #999; }
.zoombar .thin { margin: 0 16px; }
.hint { margin-left: 24px; }
.transport { flex: none; display: grid; grid-template-columns: 1fr auto 1fr; align-items: center; height: 68px; padding: 0 24px; }
.tc { display: flex; align-items: center; gap: 16px; color: var(--mute); }
.tcbox { padding: 5px 14px 5px 16px; border-radius: 8px; background: #252528; color: #e5e5e5; }
.keys { display: flex; align-items: center; }
.keys button { width: 56px; height: 56px; }
.keys .playbtn { width: 64px; height: 64px; margin: 0 10px; border-radius: 50%; background: var(--line2); color: #fff; }
.rate { display: flex; align-items: center; justify-content: flex-end; gap: 16px; color: #999; font-weight: 500; }
.rate button { height: 42px; padding: 0 18px; border-radius: 8px; }
.rate .on { background: var(--line2); color: var(--text); }
.rate select { width: 118px; height: 38px; padding-left: 20px; font-weight: 400; }
.grip { flex: none; display: flex; align-items: center; justify-content: center; height: 14px; background: var(--raised); }
.grip i { width: 64px; height: 4px; border-radius: 2px; background: var(--line2); }

.tlbar { flex: none; display: flex; align-items: center; height: 88px; padding: 0 24px; border-bottom: 2px solid var(--line); background: linear-gradient(90deg, #212121, #1a1a1d 50%, #212121); color: var(--mute); }
.tlbar > .sep { margin: 0 16px; }
.bigtc { height: 76px; padding: 0 26px; border: 2px solid var(--line2); border-radius: 8px; background: #161616; color: var(--text); font-size: 28px; line-height: 72px; font-weight: 700; letter-spacing: 1px; }
.tltools { display: flex; gap: 4px; padding: 4px; border: 2px solid var(--line); border-radius: 8px; background: var(--raised); }
.tltools button { width: 64px; height: 64px; border-radius: 8px; }
.snap { gap: 14px; height: 58px; padding: 0 27px; border-radius: 8px; font-weight: 500; }
.snap + .snap { padding: 0 30px; gap: 12px; }
.snap.on { background: var(--line2); color: var(--text); }
.tlzoom { display: flex; align-items: center; height: 64px; margin-left: auto; padding: 0 6px; border: 2px solid var(--line2); border-radius: 8px; background: var(--raised); }
.tlzoom button { width: 62px; height: 48px; }
.slider { width: 96px; height: 12px; border-radius: 6px; background: var(--line2); }
.slider span { display: block; width: 14px; height: 12px; border-radius: 6px; background: linear-gradient(90deg, #8b5cf6, #d946ef); }

.timeline { flex: none; position: relative; height: 312px; overflow: hidden; }
.ruler-row { display: flex; height: 56px; border-bottom: 2px solid var(--line2); background: #252527; }
.addtrack { flex: none; width: 240px; justify-content: flex-start; gap: 8px; padding-left: 16px; border-right: 2px solid var(--line2); background: #252529; font-weight: 500; color: var(--text); }
.ruler { flex: 1; min-width: 0; display: flex; overflow: hidden; color: var(--mute); }
.ruler span { flex: none; width: 192px; height: 16px; border-left: 2px solid var(--line2); }
.ruler .maj { height: 54px; padding: 25px 0 0 4px; border-left: 0; background: linear-gradient(#777, #777) 0 0 / 2px 24px no-repeat; white-space: nowrap; }
.track { display: flex; height: 96px; border-bottom: 2px solid var(--line); }
.thead { flex: none; width: 240px; background: var(--raised); border-right: 2px solid var(--line2); padding: 12px 8px 0; }
.trow { display: flex; align-items: center; height: 28px; gap: 12px; padding-left: 4px; color: var(--mute); }
.trow .lit { color: var(--text); }
.trow .dim { color: #55555f; stroke-width: 2; overflow: visible; }
.trow b { font-weight: 700; }
.tname { display: flex; align-items: center; gap: 8px; height: 38px; margin-top: 10px; color: #e5e5e5; }
.tname i { width: 16px; height: 16px; border-radius: 4px; }
.tname .violet { background: #8b5cf6; }
.tname .green { background: #10b981; }
.tname span { flex: 1; }
.tname button { width: 38px; height: 38px; border-radius: 8px; background: var(--line2); color: var(--text); font-weight: 500; }
.playhead { position: absolute; top: 0; bottom: 0; left: 240px; width: 4px; background: #ef4444; }
.playhead::before { content: ""; position: absolute; left: -16px; top: 0; width: 32px; height: 32px; background: #ef4444; clip-path: polygon(0 0, 100% 0, 100% 50%, 50% 100%, 0 50%); }

.inspector { flex: none; width: 640px; background: var(--panel); border-left: 2px solid var(--line); }
.itabs { display: grid; grid-template-columns: repeat(5, 1fr); gap: 8px; padding: 12px; border-bottom: 2px solid var(--line); color: var(--mute); }
.itabs button { flex-direction: column; gap: 6px; height: 86px; border-radius: 8px; }
.itabs .i { height: 28px; }
.itabs .on, .seg .on { background: var(--steel); color: #101114; }
.seg-wrap { padding: 16px; border-bottom: 2px solid var(--line); }
.seg { display: grid; grid-template-columns: repeat(3, 1fr); padding: 4px; border-radius: 8px; background: #232326; color: var(--mute); }
.seg button { height: 54px; border-radius: 8px; font-weight: 500; }
.props { padding: 24px; }
.props-head { display: flex; justify-content: space-between; align-items: center; height: 30px; }
.props-head h2 { font-weight: 600; letter-spacing: 1px; }
.props-head button { color: #999; }
.props h3 { margin: 26px 0 12px; font-weight: 400; }
.pair { display: grid; grid-template-columns: 1fr 1fr; gap: 16px; }
.field { display: flex; align-items: center; min-width: 0; }
.field label { flex: none; width: 108px; }
.field.wide { margin-top: 24px; }
.box { flex: 1; min-width: 0; display: flex; align-items: center; height: 40px; padding: 0 16px; border: 2px solid var(--line2); border-radius: 8px; background: var(--raised); }
.box input { flex: 1; min-width: 0; width: 100%; text-align: right; font-size: 22px; color: #e5e5e5; }
.box em { margin-left: 16px; color: var(--mute); font-size: 18px; font-style: normal; }
.empty { display: flex; flex-direction: column; align-items: center; margin-top: 32px; padding-top: 32px; border-top: 2px solid var(--line); color: var(--mute); }
.empty p { margin-top: 17px; }

.status { flex: none; display: flex; justify-content: space-between; align-items: center; height: 64px; padding: 0 32px; border-top: 2px solid var(--line); background: linear-gradient(90deg, #1f1f1f, #19191b 50%, #212121); color: var(--mute); }
.s-left, .pill, .sum, .s-mid, .s-right { display: flex; align-items: center; }
.s-left { gap: 24px; }
.pill { gap: 10px; height: 38px; padding: 0 16px; border-radius: 8px; background: var(--raised); }
.pill b { font-weight: 400; color: var(--text); }
.sum { gap: 10px; }
.s-mid { gap: 8px; color: var(--text); }
.s-mid i { width: 12px; height: 12px; border-radius: 50%; background: var(--steel); }
.s-right { justify-content: flex-end; gap: 8px; }
.s-right button { gap: 12px; height: 38px; padding: 0 16px; border-radius: 8px; }
.s-right .on { background: var(--raised); color: var(--text); }
.s-right .cpu { padding: 0 24px; }
.s-right .cpu i { width: 12px; height: 12px; border-radius: 50%; background: var(--line2); }
```
